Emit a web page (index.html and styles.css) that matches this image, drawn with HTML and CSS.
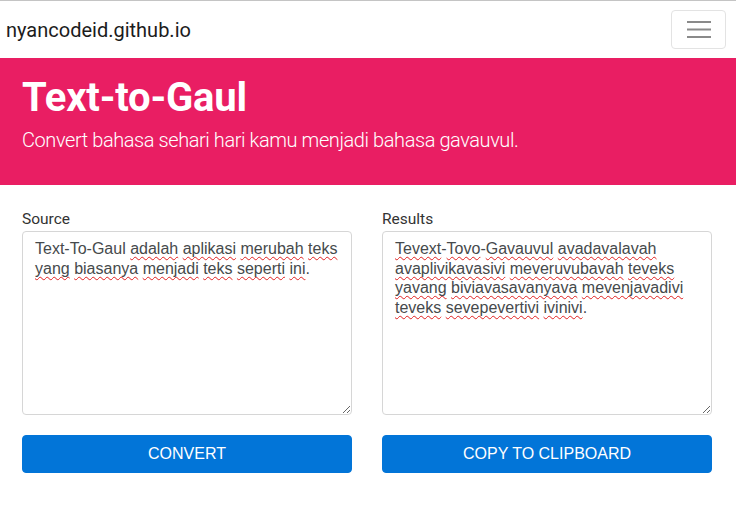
FILE: index.html
```html
<!DOCTYPE html>
<html lang="id">
<head>
<meta charset="utf-8">
<title>Text-to-Gaul</title>
<link rel="stylesheet" href="styles.css">
</head>
<body>
<nav class="navbar">
  <a class="brand" href="#">nyancodeid.github.io</a>
  <button class="toggler" type="button" aria-label="Toggle navigation">
    <svg width="24" height="17" viewBox="0 0 24 17" aria-hidden="true"><path d="M0 1h24M0 8.5h24M0 16h24" stroke="#8a8a8a" stroke-width="2" fill="none"/></svg>
  </button>
</nav>
<header class="jumbotron">
  <h1 class="title">Text-to-Gaul</h1>
  <p class="lead">Convert bahasa sehari hari kamu menjadi bahasa gavauvul.</p>
</header>
<main class="panels">
  <section class="col">
    <label class="label">Source</label>
    <div class="textbox" role="textbox" aria-multiline="true">Text-To-Gaul <span class="sp">adalah</span> <span class="sp">aplikasi</span> <span class="sp">merubah</span> <span class="sp">teks</span> <span class="sp">yang</span> <span class="sp">biasanya</span> <span class="sp">menjadi</span> <span class="sp">teks</span> <span class="sp">seperti</span> <span class="sp">ini</span>.</div>
    <button class="btn" type="button">Convert</button>
  </section>
  <section class="col">
    <label class="label">Results</label>
    <div class="textbox" role="textbox" aria-multiline="true"><span class="sp">Tevext</span>-<span class="sp">Tovo</span>-<span class="sp">Gavauvul</span> <span class="sp">avadavalavah</span> <span class="sp">avaplivikavasivi</span> <span class="sp">meveruvubavah</span> <span class="sp">teveks</span> <span class="sp">yavang</span> <span class="sp">biviavasavanyava</span> <span class="sp">mevenjavadivi</span> <span class="sp">teveks</span> <span class="sp">sevepevertivi</span> <span class="sp">ivinivi</span>.</div>
    <button class="btn" type="button">Copy to Clipboard</button>
  </section>
</main>
</body>
</html>
```
FILE: styles.css
```css
* { box-sizing: border-box; }
html, body { margin: 0; padding: 0; }
body {
  font-family: Roboto, "Open Sans", sans-serif;
  color: #292b2c;
  background: #fff;
}
.navbar {
  height: 58px;
  border-top: 1px solid #c4c4c4;
  display: flex;
  align-items: center;
  justify-content: space-between;
  padding: 0 10px 0 6px;
}
.brand {
  font-size: 20px;
  color: #1c1c1c;
  text-decoration: none;
}
.toggler {
  width: 55px;
  height: 39px;
  border: 1px solid #e3e3e3;
  border-radius: 4px;
  background: #fff;
  display: flex;
  align-items: center;
  justify-content: center;
  padding: 0;
}
.toggler svg { display: block; }
.jumbotron {
  background: #e91e63;
  color: #fff;
  padding: 16px 22px 30px;
}
.title {
  margin: 0;
  font-size: 40px;
  line-height: 48px;
  font-weight: 700;
  letter-spacing: -0.2px;
}
.lead {
  margin: 3px 0 0;
  font-size: 20px;
  line-height: 30px;
  font-weight: 300;
  letter-spacing: -0.42px;
}
.panels {
  display: grid;
  grid-template-columns: 330px 330px;
  column-gap: 30px;
  padding: 24px 24px 0 22px;
}
.col { display: flex; flex-direction: column; }
.label {
  display: block;
  font-size: 15.5px;
  line-height: 20px;
  margin-bottom: 2px;
  color: #333;
}
.textbox {
  height: 184px;
  border: 1px solid #d6d6d6;
  border-radius: 4px;
  padding: 7px 12px;
  font-family: "Liberation Sans", Arial, sans-serif;
  font-size: 16px;
  line-height: 19.7px;
  color: #464a4c;
  white-space: pre-wrap;
  overflow: auto;
  resize: both;
}
.sp {
  text-decoration: underline wavy #e02020;
  text-decoration-thickness: 1px;
  text-underline-offset: 2px;
  text-decoration-skip-ink: none;
}
.btn {
  margin-top: 20px;
  height: 38px;
  border: 1px solid #0275d8;
  border-radius: 4px;
  background: #0275d8;
  color: #fff;
  font-family: "Liberation Sans", Arial, sans-serif;
  font-size: 16px;
  line-height: 20px;
  text-transform: uppercase;
  cursor: pointer;
}
```
